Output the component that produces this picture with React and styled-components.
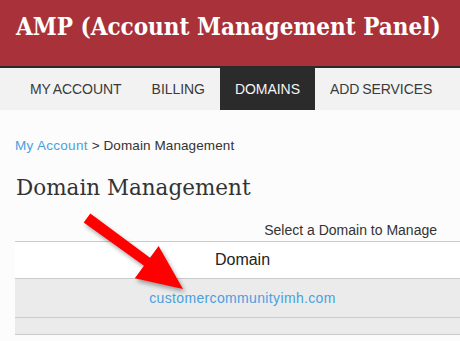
import React from 'react';
import styled, { createGlobalStyle } from 'styled-components';

const GlobalStyle = createGlobalStyle`
  html, body {
    margin: 0;
    padding: 0;
    background: #fcfcfc;
    overflow: hidden;
  }
  body {
    font-family: "Liberation Sans", Arial, sans-serif;
    color: #333;
  }
`;

const Page = styled.div`
  position: relative;
  width: 460px;
  height: 341px;
  overflow: hidden;
`;

const Header = styled.header`
  box-sizing: border-box;
  height: 68px;
  padding: 12px 0 0 16px;
  background: #a9323a;
  border-bottom: 2px solid #2a2a2a;
`;

const Title = styled.h1`
  margin: 0;
  font-family: "DejaVu Serif", "Liberation Serif", serif;
  font-stretch: condensed;
  font-size: 24px;
  line-height: 30px;
  font-weight: 600;
  color: #fff;
  white-space: nowrap;
`;

const Nav = styled.nav`
  display: flex;
  height: 42px;
  padding-left: 15px;
  background: #f2f2f2;
  white-space: nowrap;
`;

const NavItem = styled.a`
  display: flex;
  align-items: center;
  padding: 0 15px;
  font-size: 14px;
  letter-spacing: -0.05px;
  word-spacing: -1px;
  text-transform: uppercase;
  color: ${p => (p.$active ? '#f4f4f4' : '#3a3a3a')};
  background: ${p => (p.$active ? '#2b2b2b' : 'transparent')};
  text-decoration: none;
`;

const Main = styled.main`
  padding: 28px 0 0 15px;
`;

const Breadcrumb = styled.div`
  font-size: 13.5px;
  line-height: 16px;
  letter-spacing: 0.1px;
  color: #333;
  a {
    color: #4a9fe0;
    letter-spacing: 0.3px;
    text-decoration: none;
  }
`;

const Heading = styled.h2`
  margin: 21px 0 0 1px;
  font-family: "DejaVu Serif", "Liberation Serif", serif;
  font-size: 21.5px;
  line-height: 26px;
  font-weight: normal;
  color: #333;
`;

const Caption = styled.div`
  margin-top: 20px;
  padding-right: 23px;
  text-align: right;
  font-size: 14px;
  line-height: 18px;
  color: #333;
`;

const Table = styled.table`
  margin-top: 2px;
  width: 455px;
  border-collapse: collapse;
  border-top: 1px solid #cbcbcb;
`;

const HeadCell = styled.th`
  height: 36px;
  padding: 0;
  font-size: 16px;
  font-weight: normal;
  color: #222;
  background: #fff;
  border-bottom: 1px solid #cbcbcb;
`;

const Cell = styled.td`
  height: ${p => p.$h}px;
  padding: 0;
  text-align: center;
  background: #ebebeb;
  border-bottom: 1px solid #cbcbcb;
  a {
    font-size: 14px;
    letter-spacing: 0.35px;
    color: #4a9fe0;
    text-decoration: none;
  }
`;

const Arrow = styled.svg`
  position: absolute;
  left: 0;
  top: 0;
  pointer-events: none;
  filter: drop-shadow(2px 3px 2px rgba(0, 0, 0, 0.35));
`;

export default function App() {
  return (
    <Page>
      <GlobalStyle />
      <Header>
        <Title>AMP (Account Management Panel)</Title>
      </Header>
      <Nav>
        <NavItem>My Account</NavItem>
        <NavItem>Billing</NavItem>
        <NavItem $active>Domains</NavItem>
        <NavItem>Add Services</NavItem>
        <NavItem>Support</NavItem>
      </Nav>
      <Main>
        <Breadcrumb>
          <a href="#">My Account</a> &gt; Domain Management
        </Breadcrumb>
        <Heading>Domain Management</Heading>
        <Caption>Select a Domain to Manage</Caption>
        <Table>
          <thead>
            <tr>
              <HeadCell>Domain</HeadCell>
            </tr>
          </thead>
          <tbody>
            <tr>
              <Cell $h={38}>
                <a href="#">customercommunityimh.com</a>
              </Cell>
            </tr>
            <tr>
              <Cell $h={16} />
            </tr>
          </tbody>
        </Table>
      </Main>
      <Arrow width="460" height="341" viewBox="0 0 460 341">
        <polygon
          fill="#ff0000"
          points="90.3,213.6 83.7,222.4 144,265.8 134.8,278.3 183,289 158.6,246.1 150,257.8"
        />
      </Arrow>
    </Page>
  );
}
